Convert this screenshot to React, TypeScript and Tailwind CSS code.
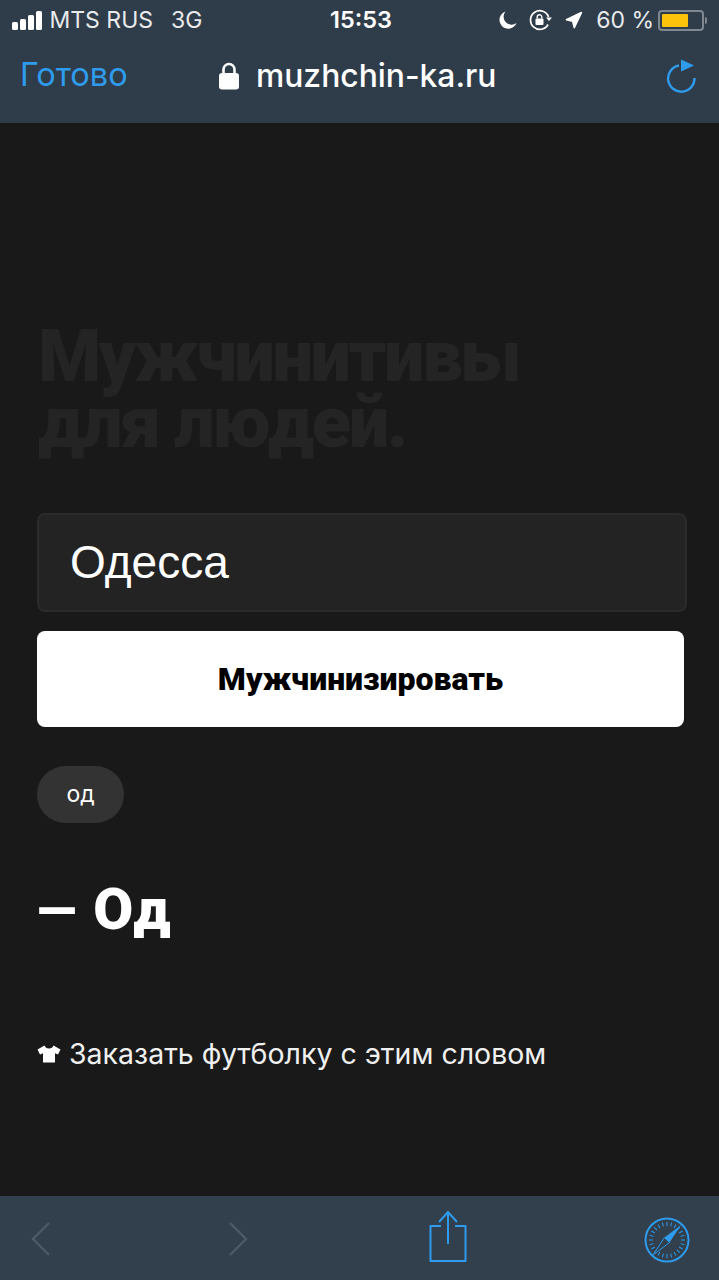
import { Navigation } from "lucide-react";

const SANS = "font-['Inter','Liberation_Sans',sans-serif]";

function SignalBars() {
  return (
    <div className="flex items-end gap-[2.500px]">
      <span className="h-[8px] w-[5.500px] rounded-[1.500px] bg-white" />
      <span className="h-[11px] w-[5.500px] rounded-[1.500px] bg-white" />
      <span className="h-[15px] w-[5.500px] rounded-[1.500px] bg-white" />
      <span className="h-[19px] w-[5.500px] rounded-[1.500px] bg-white" />
    </div>
  );
}

function MoonIcon() {
  return (
    <svg width="18" height="18" viewBox="0 0 18 18" fill="#fff">
      <path d="M6.500 0.500A8.800 8.800 0 1 0 17.500 12 8 8 0 0 1 6.500 0.500z" />
    </svg>
  );
}

function LockIcon() {
  return (
    <svg width="22" height="28" viewBox="0 0 22 28" fill="none">
      <path d="M5.500 13V7.500a5.500 5.500 0 0 1 11 0V13" stroke="#fff" strokeWidth="2.600" />
      <rect x="1" y="11" width="20" height="16.500" rx="3" fill="#fff" />
    </svg>
  );
}

function RotationLock() {
  return (
    <svg width="24" height="22" viewBox="0 0 24 22" fill="none">
      <path d="M19 15.500A9.300 9.300 0 1 1 19.600 8" stroke="#fff" strokeWidth="1.700" />
      <path d="M17 8.500h6l-3 3.500z" fill="#fff" />
      <rect x="6.500" y="9.500" width="8" height="6.500" rx="1" fill="#fff" />
      <path d="M8.200 9.500V8a2.300 2.300 0 0 1 4.600 0v1.500" stroke="#fff" strokeWidth="1.400" />
    </svg>
  );
}

function Battery() {
  return (
    <div className="flex items-center gap-[1px]">
      <div className="h-[21px] w-[46px] rounded-[4px] border-2 border-[#7f8891] p-[2px]">
        <div className="h-full w-[26px] rounded-[1px] bg-[#fdc30a]" />
      </div>
      <span className="h-[7px] w-[2px] rounded-r-sm bg-[#7f8891]" />
    </div>
  );
}

function ReloadIcon() {
  return (
    <svg width="32" height="34" viewBox="0 0 32 34" fill="none">
      <path d="M14 6.500A13.200 13.200 0 1 0 29.500 19" stroke="#2f9bec" strokeWidth="2.400" />
      <path d="M16 0.500 29 6.500 16 12.500z" fill="#2f9bec" />
    </svg>
  );
}

function ShareIcon() {
  return (
    <svg width="38" height="52" viewBox="0 0 38 52" fill="none" stroke="#2f9bec" strokeWidth="2">
      <path d="M12 15H1.500v35h35V15H26" />
      <path d="M19 1v32M10 11l9-10 9 10" />
    </svg>
  );
}

function CompassIcon() {
  const ticks = Array.from({ length: 24 }, (_, i) => i * 15);
  return (
    <svg width="46" height="46" viewBox="0 0 46 46" fill="none">
      <circle cx="23" cy="23" r="21.500" stroke="#2f9bec" strokeWidth="2" />
      {ticks.map((deg) => (
        <line
          key={deg}
          x1="23"
          y1="5"
          x2="23"
          y2="9"
          stroke="#2f9bec"
          strokeWidth="1"
          transform={`rotate(${deg} 23 23)`}
        />
      ))}
      <path d="M37 8 25.500 25.500 20.500 20.500z" fill="#2f9bec" />
      <path d="M9 38 20.500 20.500 25.500 25.500z" stroke="#2f9bec" strokeWidth="1" fill="#323f4d" />
    </svg>
  );
}

function ShirtIcon() {
  return (
    <svg width="24" height="18" viewBox="0 0 24 18" fill="#fff">
      <path d="M7.500 0.500 0.500 4.500l2.500 5 3-1.200V17.500h12V8.300l3 1.200 2.500-5-7-4c-.8 2-2 3-4.500 3S8.300 2.500 7.500.5z" />
    </svg>
  );
}

export default function App() {
  return (
    <div className={`flex h-[1280px] w-[719px] flex-col overflow-hidden bg-[#191919] ${SANS}`}>
      <header className="flex h-[123px] shrink-0 flex-col bg-[#2f3d4b] text-white">
        <div className="relative flex h-[40px] items-center justify-between pl-[12px] pr-[12px]">
          <div className="flex items-center text-[23px] font-normal text-[#e8eaec]">
            <SignalBars />
            <span className="ml-[8px]">MTS RUS</span>
            <span className="ml-[18px]">3G</span>
          </div>
          <span className="absolute left-[330px] text-[23.500px] font-semibold">15:53</span>
          <div className="flex items-center text-[23px] text-[#e8eaec]">
            <MoonIcon />
            <span className="ml-[12px]"><RotationLock /></span>
            <Navigation size={19} fill="#fff" stroke="#fff" className="ml-[11px]" />
            <span className="ml-[13px]">60 %</span>
            <span className="ml-[4px]"><Battery /></span>
          </div>
        </div>
        <div className="relative flex flex-1 items-center justify-between pb-[12px] pl-[20px] pr-[22px]">
          <span className="text-[32.500px] text-[#2f9bec]">Готово</span>
          <div className="absolute left-[218px] flex items-center gap-[16px]">
            <LockIcon />
            <span className="text-[31.800px] font-medium">muzhchin-ka.ru</span>
          </div>
          <ReloadIcon />
        </div>
      </header>

      <main className="flex-1 pl-[37px] pr-[33px] pt-[201px]">
        <h1 className="pl-[1px] font-['Roboto',sans-serif] text-[72px] font-black leading-[66px] tracking-[-2.300px] text-[#242424]">
          Мужчинитивы
          <br />
          для людей.
        </h1>
        <div className="mt-[57px] flex h-[99px] w-[650px] items-center rounded-[8px] border-2 border-[#2b2b2b] bg-[#232323] pl-[31px] font-['Liberation_Sans',sans-serif] text-[46px] text-white">
          Одесса
        </div>
        <button className="mt-[19px] h-[96px] w-[647px] rounded-[8px] bg-white font-['Roboto',sans-serif] text-[32px] font-black text-black">
          Мужчинизировать
        </button>
        <div className="mt-[39px] flex h-[57px] w-[87px] items-center justify-center rounded-full bg-[#333333] text-[23px] font-normal text-white">
          од
        </div>
        <p className="mt-[46px] font-['Roboto',sans-serif] text-[58px] font-black leading-[80px] text-white">
          <span className="mr-[17px] text-[52px]">—</span>Од
        </p>
        <div className="mt-[81px] flex items-center gap-[8px] text-[28.500px] text-[#f0f0f0]">
          <ShirtIcon />
          <span>Заказать футболку с этим словом</span>
        </div>
      </main>

      <footer className="relative flex h-[84px] shrink-0 items-center bg-[#323f4d]">
        <svg className="absolute left-[31px] top-[26px]" width="20" height="34" viewBox="0 0 20 34" fill="none">
          <path d="M18 1 2 17l16 16" stroke="#4d5a67" strokeWidth="2.400" />
        </svg>
        <svg className="absolute left-[228px] top-[26px]" width="20" height="34" viewBox="0 0 20 34" fill="none">
          <path d="M2 1l16 16L2 33" stroke="#4d5a67" strokeWidth="2.400" />
        </svg>
        <span className="absolute left-[429px] top-[15px]"><ShareIcon /></span>
        <span className="absolute left-[644px] top-[21px]"><CompassIcon /></span>
      </footer>
    </div>
  );
}
